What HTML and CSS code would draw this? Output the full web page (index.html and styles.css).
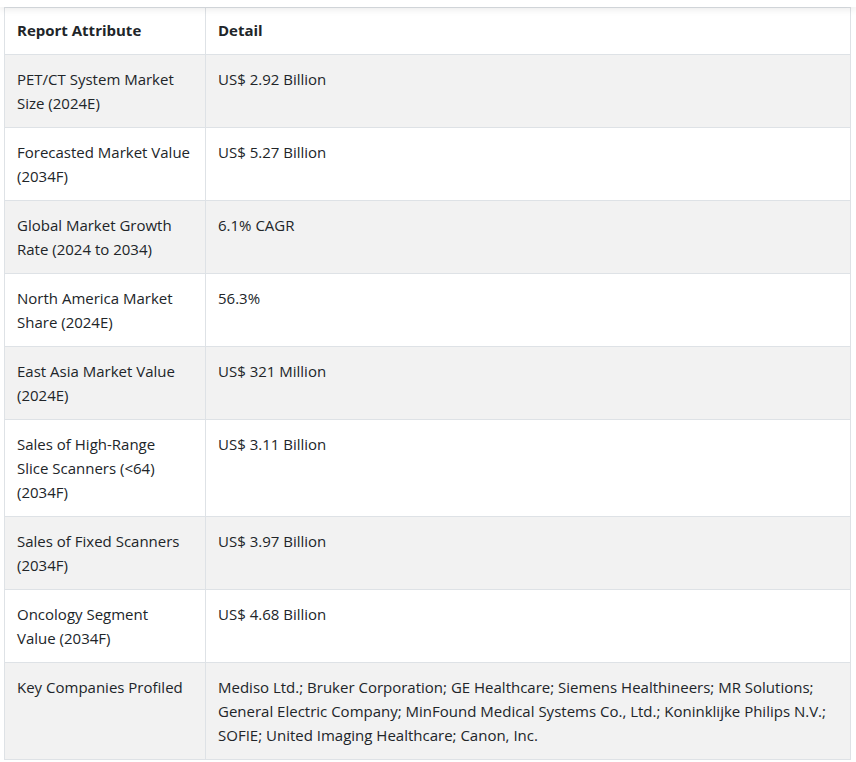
FILE: index.html
```html
<!DOCTYPE html>
<html>
<head>
<meta charset="utf-8">
<link rel="stylesheet" href="styles.css">
</head>
<body>
<div class="topbar"></div>
<div class="wrap">
<table class="report">
<thead>
<tr><th class="c1">Report Attribute</th><th>Detail</th></tr>
</thead>
<tbody>
<tr><td class="c1">PET/CT System Market Size (2024E)</td><td>US$ 2.92 Billion</td></tr>
<tr><td class="c1">Forecasted Market Value (2034F)</td><td>US$ 5.27 Billion</td></tr>
<tr><td class="c1">Global Market Growth Rate (2024 to 2034)</td><td>6.1% CAGR</td></tr>
<tr><td class="c1">North America Market Share (2024E)</td><td>56.3%</td></tr>
<tr><td class="c1">East Asia Market Value (2024E)</td><td>US$ 321 Million</td></tr>
<tr><td class="c1">Sales of High-Range<br>Slice Scanners (&lt;64) (2034F)</td><td>US$ 3.11 Billion</td></tr>
<tr><td class="c1">Sales of Fixed Scanners (2034F)</td><td>US$ 3.97 Billion</td></tr>
<tr><td class="c1">Oncology Segment<br>Value (2034F)</td><td>US$ 4.68 Billion</td></tr>
<tr><td class="c1">Key Companies Profiled</td><td>Mediso Ltd.; Bruker Corporation; GE Healthcare; Siemens Healthineers; MR Solutions; General Electric Company; MinFound Medical Systems Co., Ltd.; Koninklijke Philips N.V.; SOFIE; United Imaging Healthcare; Canon, Inc.</td></tr>
</tbody>
</table>
</div>
</body>
</html>
```
FILE: styles.css
```css
html, body {
  margin: 0;
  padding: 0;
  background: #fff;
}
body {
  font-family: "Open Sans", "Noto Sans", sans-serif;
  font-size: 15px;
  color: #212529;
}
.topbar {
  position: relative;
  z-index: 2;
  height: 7px;
  background: #fff;
  box-shadow: 0 1px 8px rgba(0, 0, 0, 0.12);
}
.wrap {
  padding: 0 5px 0 4px;
}
.report {
  width: 847px;
  border-collapse: collapse;
  border: 1px solid #dee2e6;
}
.report th, .report td {
  border: 1px solid #dee2e6;
  padding: 12px;
  line-height: 24px;
  text-align: left;
  vertical-align: top;
}
.report th {
  font-weight: 700;
  padding: 10px 12px 12px;
}
.report .c1 {
  width: 176px;
}
.report tbody tr:nth-child(odd) {
  background: #f2f2f2;
}
```
